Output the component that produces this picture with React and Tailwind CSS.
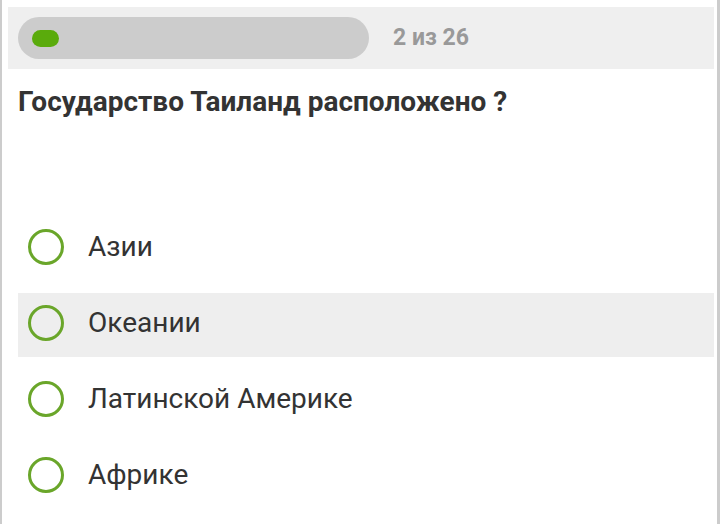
import React from 'react';

const options = ['Азии', 'Океании', 'Латинской Америке', 'Африке'];

const Radio = () => (
  <span className="w-[36px] h-[36px] shrink-0 rounded-full border-[3px] border-[#6aa62a]" />
);

const App = () => {
  const current = 2;
  const total = 26;
  const highlighted = 1;

  return (
    <div
      className="w-[720px] h-[524px] bg-white border-l-2 border-r-[3px] border-[#cccccc] overflow-hidden"
      style={{ fontFamily: 'Roboto, "Noto Sans", sans-serif' }}
    >
      {/* Progress header */}
      <div className="mt-[7px] ml-[6px] mr-[3px] h-[62px] bg-[#efefef] flex items-center pl-[10px]">
        <div className="w-[351px] h-[42px] rounded-full bg-[#cccccc] flex items-center pl-[14px]">
          <div className="w-[27px] h-[17px] rounded-full bg-[#5aab0c]" />
        </div>
        <span className="ml-[24px] text-[23px] font-bold text-[#999999]">
          {current} из {total}
        </span>
      </div>

      {/* Question */}
      <h1 className="mt-[16px] ml-[16px] text-[28px] leading-[34px] font-bold text-[#333333]">
        Государство Таиланд расположено ?
      </h1>

      {/* Answers */}
      <div className="mt-[98px] ml-[16px] mr-[3px] flex flex-col gap-[12px]">
        {options.map((opt, i) => (
          <div
            key={opt}
            className={
              'h-[64px] flex items-center pl-[10px] pb-[4px] ' +
              (i === highlighted ? 'bg-[#eeeeee]' : '')
            }
          >
            <Radio />
            <span className="ml-[24px] text-[28px] text-[#333333]">{opt}</span>
          </div>
        ))}
      </div>
    </div>
  );
};

export default App;
